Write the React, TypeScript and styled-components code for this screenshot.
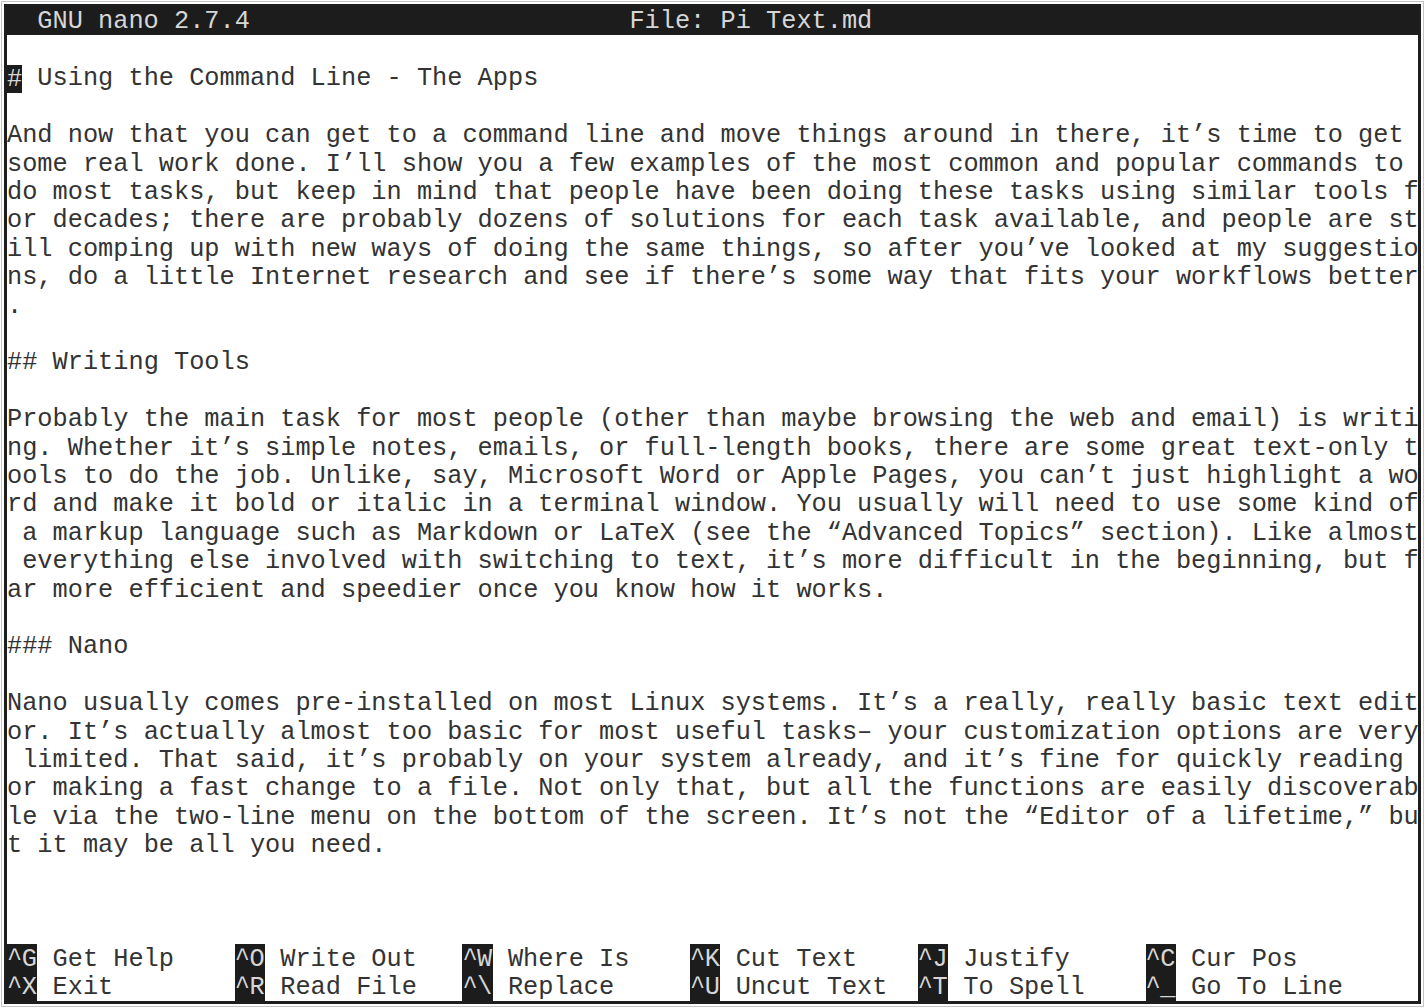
import React from "react";
import styled, { createGlobalStyle } from "styled-components";

const GlobalStyle = createGlobalStyle`
	html, body {
		margin: 0;
		padding: 0;
		background: #ffffff;
	}
`;

const Screen = styled.div`
	margin: 4px;
	height: 994px;
	border: 3px solid #1e1e1e;
	box-shadow: 0 0 0 2px #ffffff, 0 0 0 3px #c4c4c4;
	background: #ffffff;
	color: #333333;
	font-family: "Liberation Mono", "DejaVu Sans Mono", monospace;
	font-size: 25.3px;
	line-height: 1;
	display: grid;
	grid-template-rows: repeat(35, minmax(0, 1fr));
	overflow: hidden;
`;

const TitleBar = styled.div`
	display: flex;
	align-items: center;
	background: #1c1c1c;
	color: #d6d6d6;
	padding-left: 2ch;
	white-space: pre;
`;

const AppName = styled.span`
	flex: 0 0 39ch;
`;

const Line = styled.div`
	display: flex;
	align-items: center;
	padding-top: 2px;
	white-space: pre;
`;

const Cursor = styled.span`
	background: #1c1c1c;
	color: #d6d6d6;
	padding: 2px 0 1px;
`;

const ShortcutRow = styled.div`
	display: grid;
	grid-template-columns: repeat(6, 15ch);
	align-items: stretch;
	white-space: pre;
`;

const Shortcut = styled.div`
	display: flex;
	align-items: center;
`;

const Key = styled.span`
	display: flex;
	align-items: center;
	align-self: stretch;
	width: 2ch;
	padding-top: 2px;
	background: #1c1c1c;
	color: #d6d6d6;
	margin-right: 1ch;
	letter-spacing: -0.5px;
`;

const Label = styled.span`
	padding-top: 2px;
	color: #333333;
`;

const body: string[] = [
	"",
	"#",
	"",
	"And now that you can get to a command line and move things around in there, it\u2019s time to get ",
	"some real work done. I\u2019ll show you a few examples of the most common and popular commands to ",
	"do most tasks, but keep in mind that people have been doing these tasks using similar tools f",
	"or decades; there are probably dozens of solutions for each task available, and people are st",
	"ill comping up with new ways of doing the same things, so after you\u2019ve looked at my suggestio",
	"ns, do a little Internet research and see if there\u2019s some way that fits your workflows better",
	".",
	"",
	"## Writing Tools",
	"",
	"Probably the main task for most people (other than maybe browsing the web and email) is writi",
	"ng. Whether it\u2019s simple notes, emails, or full-length books, there are some great text-only t",
	"ools to do the job. Unlike, say, Microsoft Word or Apple Pages, you can\u2019t just highlight a wo",
	"rd and make it bold or italic in a terminal window. You usually will need to use some kind of",
	" a markup language such as Markdown or LaTeX (see the \u201cAdvanced Topics\u201d section). Like almost",
	" everything else involved with switching to text, it\u2019s more difficult in the beginning, but f",
	"ar more efficient and speedier once you know how it works.",
	"",
	"### Nano",
	"",
	"Nano usually comes pre-installed on most Linux systems. It\u2019s a really, really basic text edit",
	"or. It\u2019s actually almost too basic for most useful tasks\u2013 your customization options are very",
	" limited. That said, it\u2019s probably on your system already, and it\u2019s fine for quickly reading ",
	"or making a fast change to a file. Not only that, but all the functions are easily discoverab",
	"le via the two-line menu on the bottom of the screen. It\u2019s not the \u201cEditor of a lifetime,\u201d bu",
	"t it may be all you need.",
	"",
	"",
	"",
];

const shortcuts: [string, string][][] = [
	[
		["^G", "Get Help"],
		["^O", "Write Out"],
		["^W", "Where Is"],
		["^K", "Cut Text"],
		["^J", "Justify"],
		["^C", "Cur Pos"],
	],
	[
		["^X", "Exit"],
		["^R", "Read File"],
		["^\\", "Replace"],
		["^U", "Uncut Text"],
		["^T", "To Spell"],
		["^_", "Go To Line"],
	],
];

const App: React.FC = () => {
	return (
		<>
			<GlobalStyle />
			<Screen>
				<TitleBar>
					<AppName>GNU nano 2.7.4</AppName>
					<span>File: Pi Text.md</span>
				</TitleBar>
				{body.map((text, i) =>
					text === "#" ? (
						<Line key={i}>
							<Cursor>#</Cursor> Using the Command Line - The Apps
						</Line>
					) : (
						<Line key={i}>{text}</Line>
					)
				)}
				{shortcuts.map((row, r) => (
					<ShortcutRow key={r}>
						{row.map(([key, label]) => (
							<Shortcut key={key}>
								<Key>{key}</Key>
								<Label>{label}</Label>
							</Shortcut>
						))}
					</ShortcutRow>
				))}
			</Screen>
		</>
	);
};

export default App;
